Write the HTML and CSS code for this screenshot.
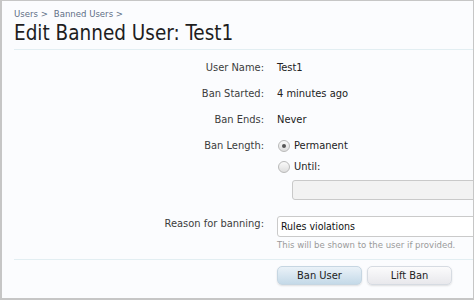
FILE: index.html
```html
<!DOCTYPE html>
<html>
<head>
<meta charset="utf-8">
<link rel="stylesheet" href="styles.css">
</head>
<body>
<div class="frame">
  <nav class="crumbs">
    <span class="crumb">Users &gt;</span>
    <span class="crumb">Banned Users &gt;</span>
  </nav>
  <h1 class="title">Edit Banned User: Test1</h1>
  <form class="form">
    <div class="row">
      <div class="label">User Name:</div>
      <div class="value">Test1</div>
    </div>
    <div class="row">
      <div class="label">Ban Started:</div>
      <div class="value">4 minutes ago</div>
    </div>
    <div class="row">
      <div class="label">Ban Ends:</div>
      <div class="value">Never</div>
    </div>
    <div class="row">
      <div class="label">Ban Length:</div>
      <div class="value">
        <div class="radio-line"><span class="radio checked"></span>Permanent</div>
        <div class="radio-line"><span class="radio"></span>Until:</div>
        <div class="date-input"></div>
      </div>
    </div>
    <div class="row reason">
      <div class="label">Reason for banning:</div>
      <div class="value">
        <div class="text-input">Rules violations</div>
        <div class="hint">This will be shown to the user if provided.</div>
      </div>
    </div>
    <div class="row buttons">
      <div class="label"></div>
      <div class="value btns">
        <span class="btn primary">Ban User</span>
        <span class="btn">Lift Ban</span>
      </div>
    </div>
  </form>
</div>
</body>
</html>
```
FILE: styles.css
```css
html, body {
  margin: 0;
  padding: 0;
  background: #ffffff;
}
.frame {
  width: 474px;
  height: 300px;
  box-sizing: border-box;
  border: 1px solid #c6c6c6;
  border-bottom-width: 2px;
  border-left-width: 2px;
  background: #fbfcfe;
  overflow: hidden;
  padding-left: 12px;
  font-family: "DejaVu Sans Condensed", "DejaVu Sans", sans-serif;
  color: #222;
}
.crumbs {
  display: flex;
  gap: 6px;
  padding-top: 6px;
  font-size: 9.5px;
  line-height: 13px;
  color: #5f6f86;
}
.title {
  margin: 1px 0 0;
  font-weight: normal;
  font-size: 20.5px;
  line-height: 24px;
  color: #1e1e1e;
  padding-bottom: 4px;
  border-bottom: 1px solid #e2eef2;
}
.form {
  padding-top: 5px;
  font-size: 11px;
  line-height: 16px;
}
.row {
  display: flex;
  gap: 13px;
  padding: 5px 0;
}
.label {
  width: 250px;
  flex: none;
  text-align: right;
  color: #3c3c3c;
}
.value {
  flex: 1;
  min-width: 0;
}
.radio-line {
  display: flex;
  align-items: center;
  gap: 4px;
  margin-left: 1px;
  margin-bottom: 5px;
}
.radio {
  width: 10px;
  height: 10px;
  border-radius: 50%;
  border: 1px solid #b9b9b9;
  background: linear-gradient(#fafafa, #dedede);
  position: relative;
}
.radio.checked::after {
  content: "";
  position: absolute;
  left: 3px;
  top: 3px;
  width: 4px;
  height: 4px;
  border-radius: 50%;
  background: #555;
}
.date-input {
  margin-left: 15px;
  height: 18px;
  width: 220px;
  border: 1px solid #c9c9c9;
  border-radius: 3px;
  background: #f2f2f2;
}
.reason {
  padding-top: 11px;
}
.text-input {
  height: 19px;
  width: 220px;
  border: 1px solid #cacaca;
  border-radius: 3px;
  background: #fff;
  line-height: 19px;
  padding-left: 3px;
  color: #111;
  font-size: 10.5px;
}
.hint {
  font-size: 9.5px;
  color: #9a9a9a;
  line-height: 14px;
  margin-top: 1px;
}
.buttons {
  border-top: 1px solid #e2eef2;
  margin-top: 2px;
  padding-top: 6px;
}
.btns {
  display: flex;
  gap: 5px;
}
.btn {
  width: 85px;
  height: 19px;
  box-sizing: border-box;
  border: 1px solid #d6dbe2;
  border-radius: 5px;
  background: linear-gradient(#fbfbfc, #e8e8ec);
  box-shadow: 0 1px 2px rgba(0,0,0,0.12);
  text-align: center;
  line-height: 17px;
  color: #222;
}
.btn.primary {
  background: linear-gradient(#eaf2f8, #c4d9e8);
  border-color: #c6d6e2;
}
```
